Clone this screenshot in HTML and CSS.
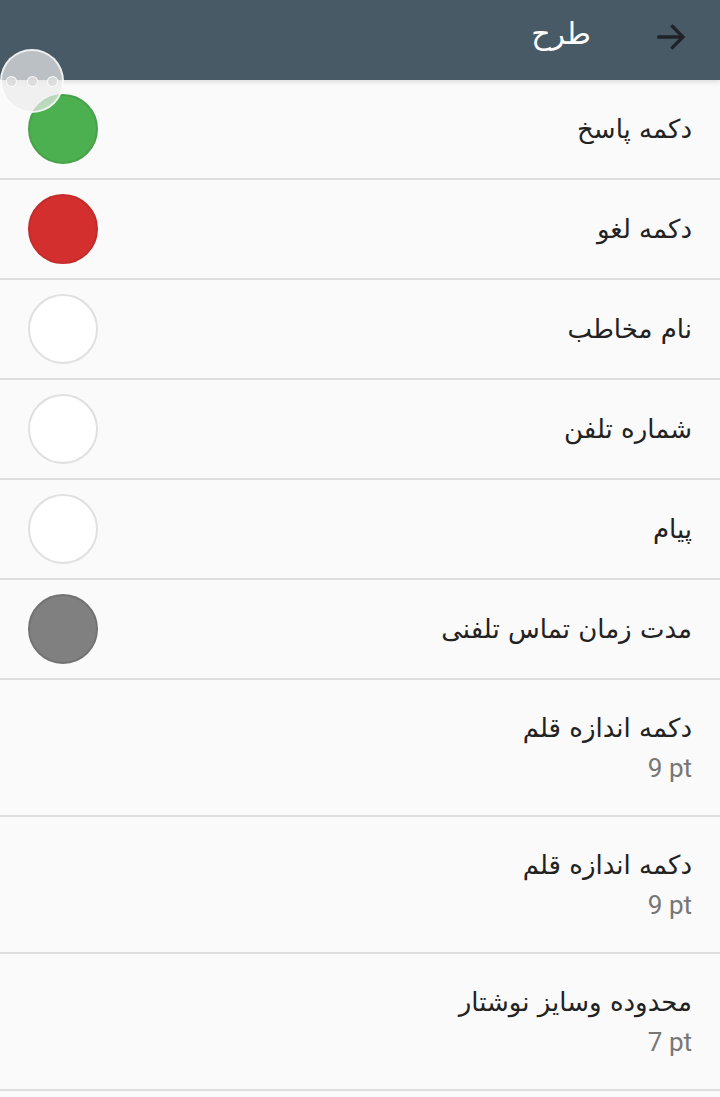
FILE: index.html
```html
<!DOCTYPE html>
<html lang="fa" dir="rtl">
<head>
<meta charset="utf-8">
<link rel="stylesheet" href="styles.css">
</head>
<body>
<header class="appbar">
  <svg class="back" viewBox="0 0 24 24" width="36" height="36"><path d="M4 12h15M13 5l7 7-7 7" fill="none" stroke="#1f2328" stroke-width="2.2" stroke-linecap="square"/></svg>
  <h1 class="title">طرح</h1>
</header>
<main class="list">
  <div class="row"><span class="label">دکمه پاسخ</span><span class="swatch green"></span></div>
  <div class="row"><span class="label">دکمه لغو</span><span class="swatch red"></span></div>
  <div class="row"><span class="label">نام مخاطب</span><span class="swatch white"></span></div>
  <div class="row"><span class="label">شماره تلفن</span><span class="swatch white"></span></div>
  <div class="row"><span class="label">پیام</span><span class="swatch white"></span></div>
  <div class="row"><span class="label">مدت زمان تماس تلفنی</span><span class="swatch grey"></span></div>
  <div class="row tall"><span class="label">دکمه اندازه قلم</span><span class="sub" dir="ltr">9 pt</span></div>
  <div class="row tall"><span class="label">دکمه اندازه قلم</span><span class="sub" dir="ltr">9 pt</span></div>
  <div class="row tall"><span class="label">محدوده وسایز نوشتار</span><span class="sub" dir="ltr">7 pt</span></div>
</main>
<div class="float"><i></i><i></i><i></i></div>
</body>
</html>
```
FILE: styles.css
```css
html, body { margin: 0; padding: 0; }
body {
  background: #fafafa;
  font-family: "DejaVu Sans", "Noto Sans", sans-serif;
  color: #212121;
  width: 720px;
  height: 1097px;
  overflow: hidden;
}
.appbar {
  height: 80px;
  background: #485a66;
  display: flex;
  align-items: center;
  padding: 0 31px 0 0;
  gap: 62px;
  box-shadow: 0 2px 5px rgba(0,0,0,0.12);
  position: relative;
  z-index: 1;
}
.back { display: block; margin-top: -6px; }
.title {
  margin: 0;
  color: #fff;
  font-weight: normal;
  font-size: 30px;
  margin-top: -14px;
}
.list { display: flex; flex-direction: column; }
.row {
  height: 98px;
  border-bottom: 2px solid #dedede;
  display: flex;
  align-items: center;
  justify-content: space-between;
  padding: 0 28px;
}
.row.tall {
  height: 135px;
  flex-direction: column;
  align-items: flex-start;
  justify-content: center;
  gap: 10px;
}
.label { font-size: 26px; color: #222; }
.sub { font-size: 26px; color: #777; font-family: "Roboto", sans-serif; }
.swatch {
  width: 66px;
  height: 66px;
  border-radius: 50%;
  border: 2px solid #ddd;
}
.green { background: #4caf50; border-color: #47a24a; }
.red { background: #d32f2f; border-color: #c42b2b; }
.white { background: #fff; border-color: #e0e0e0; }
.grey { background: #808080; border-color: #727272; }
.float {
  position: absolute;
  left: 0;
  top: 49px;
  width: 64px;
  height: 64px;
  border-radius: 50%;
  background: rgba(235,235,235,0.7);
  border: 2px solid rgba(255,255,255,0.75);
  display: flex;
  align-items: center;
  justify-content: space-between;
  padding: 0 4px;
  box-sizing: border-box;
  direction: ltr;
  z-index: 2;
}
.float i {
  width: 11px;
  height: 11px;
  border-radius: 50%;
  background: rgba(220,220,220,0.9);
  border: 1px solid rgba(255,255,255,0.8);
  box-sizing: border-box;
}
```
